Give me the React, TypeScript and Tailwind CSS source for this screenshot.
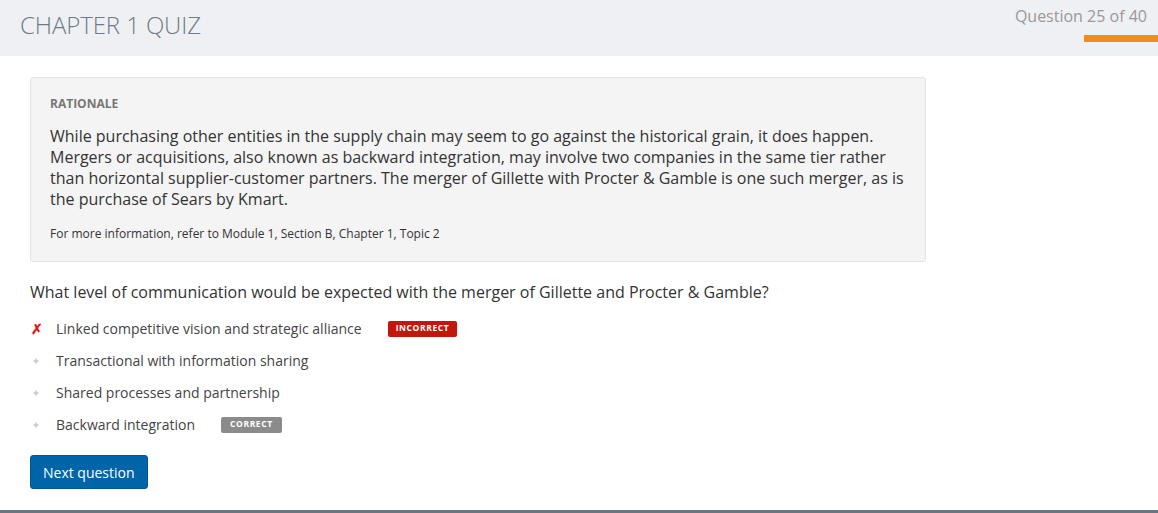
const OPTIONS = [
  { text: 'Linked competitive vision and strategic alliance', state: 'incorrect' },
  { text: 'Transactional with information sharing', state: 'none' },
  { text: 'Shared processes and partnership', state: 'none' },
  { text: 'Backward integration', state: 'correct' },
] as const;

function Bullet() {
  return (
    <svg width="8" height="8" viewBox="0 0 8 8" className="block">
      <path d="M4 0.5 L5 3 L7.5 4 L5 5 L4 7.5 L3 5 L0.5 4 L3 3 Z" fill="#c8c8c8" />
    </svg>
  );
}

export default function App() {
  return (
    <div className="min-h-[513px] bg-white flex flex-col font-['Open_Sans',sans-serif] text-[#333]">
      {/* header */}
      <header className="h-[56px] bg-[#eff0f4] flex justify-between">
        <h1 className="pl-[20px] pt-[7px] text-[24px] font-light text-[#6e7a86] tracking-[-0.1px]">
          CHAPTER 1 QUIZ
        </h1>
        <div className="flex flex-col items-end pt-[6px]">
          <span className="pr-[11px] text-[16px] text-[#999] leading-[20px]">Question 25 of 40</span>
          <div className="mt-[9px] w-[74px] h-[7px] bg-[#f28c1c]" />
        </div>
      </header>

      <main className="flex-1 px-[30px] pt-[21px]">
        <section className="w-[896px] bg-[#f4f4f4] border border-[#e4e4e4] rounded-[3px] px-[19px] pt-[17px] pb-[18px]">
          <p className="text-[12px] font-bold text-[#777] leading-[18px]">RATIONALE</p>
          <p className="mt-[13px] text-[16px] leading-[21px] text-[#333]">
            While purchasing other entities in the supply chain may seem to go against the historical grain, it does happen.
            Mergers or acquisitions, also known as backward integration, may involve two companies in the same tier rather
            than horizontal supplier-customer partners. The merger of Gillette with Procter &amp; Gamble is one such merger, as is
            the purchase of Sears by Kmart.
          </p>
          <p className="mt-[15px] text-[12px] leading-[18px] text-[#333]">
            For more information, refer to Module 1, Section B, Chapter 1, Topic 2
          </p>
        </section>

        <p className="mt-[18px] text-[16px] leading-[24px] text-[#333]">
          What level of communication would be expected with the merger of Gillette and Procter &amp; Gamble?
        </p>

        <ul className="mt-[14px] flex flex-col gap-[11px]">
          {OPTIONS.map(({ text, state }) => (
            <li key={text} className="flex items-center h-[21px]">
              <span className="w-[26px] flex justify-start pl-[1px]">
                {state === 'incorrect' ? (
                  <span className="text-[#e41b1b] text-[14px] font-bold leading-none">✗</span>
                ) : (
                  <span className="pl-[1px]"><Bullet /></span>
                )}
              </span>
              <span className="text-[14px] text-[#444]">{text}</span>
              {state === 'incorrect' && (
                <span className="ml-[26px] h-[16px] px-[8px] rounded-[2px] bg-[#c4160c] text-white text-[8.5px] font-bold tracking-[0.6px] flex items-center">
                  INCORRECT
                </span>
              )}
              {state === 'correct' && (
                <span className="ml-[26px] h-[16px] px-[9px] rounded-[2px] bg-[#8b8b8b] text-white text-[8.5px] font-bold tracking-[0.6px] flex items-center">
                  CORRECT
                </span>
              )}
            </li>
          ))}
        </ul>

        <button className="mt-[20px] h-[34px] px-[12px] rounded-[3px] bg-[#0064a8] border border-[#00568f] text-white text-[14px]">
          Next question
        </button>
      </main>

      <div className="h-[3px] bg-[#6b7780]" />
    </div>
  );
}
